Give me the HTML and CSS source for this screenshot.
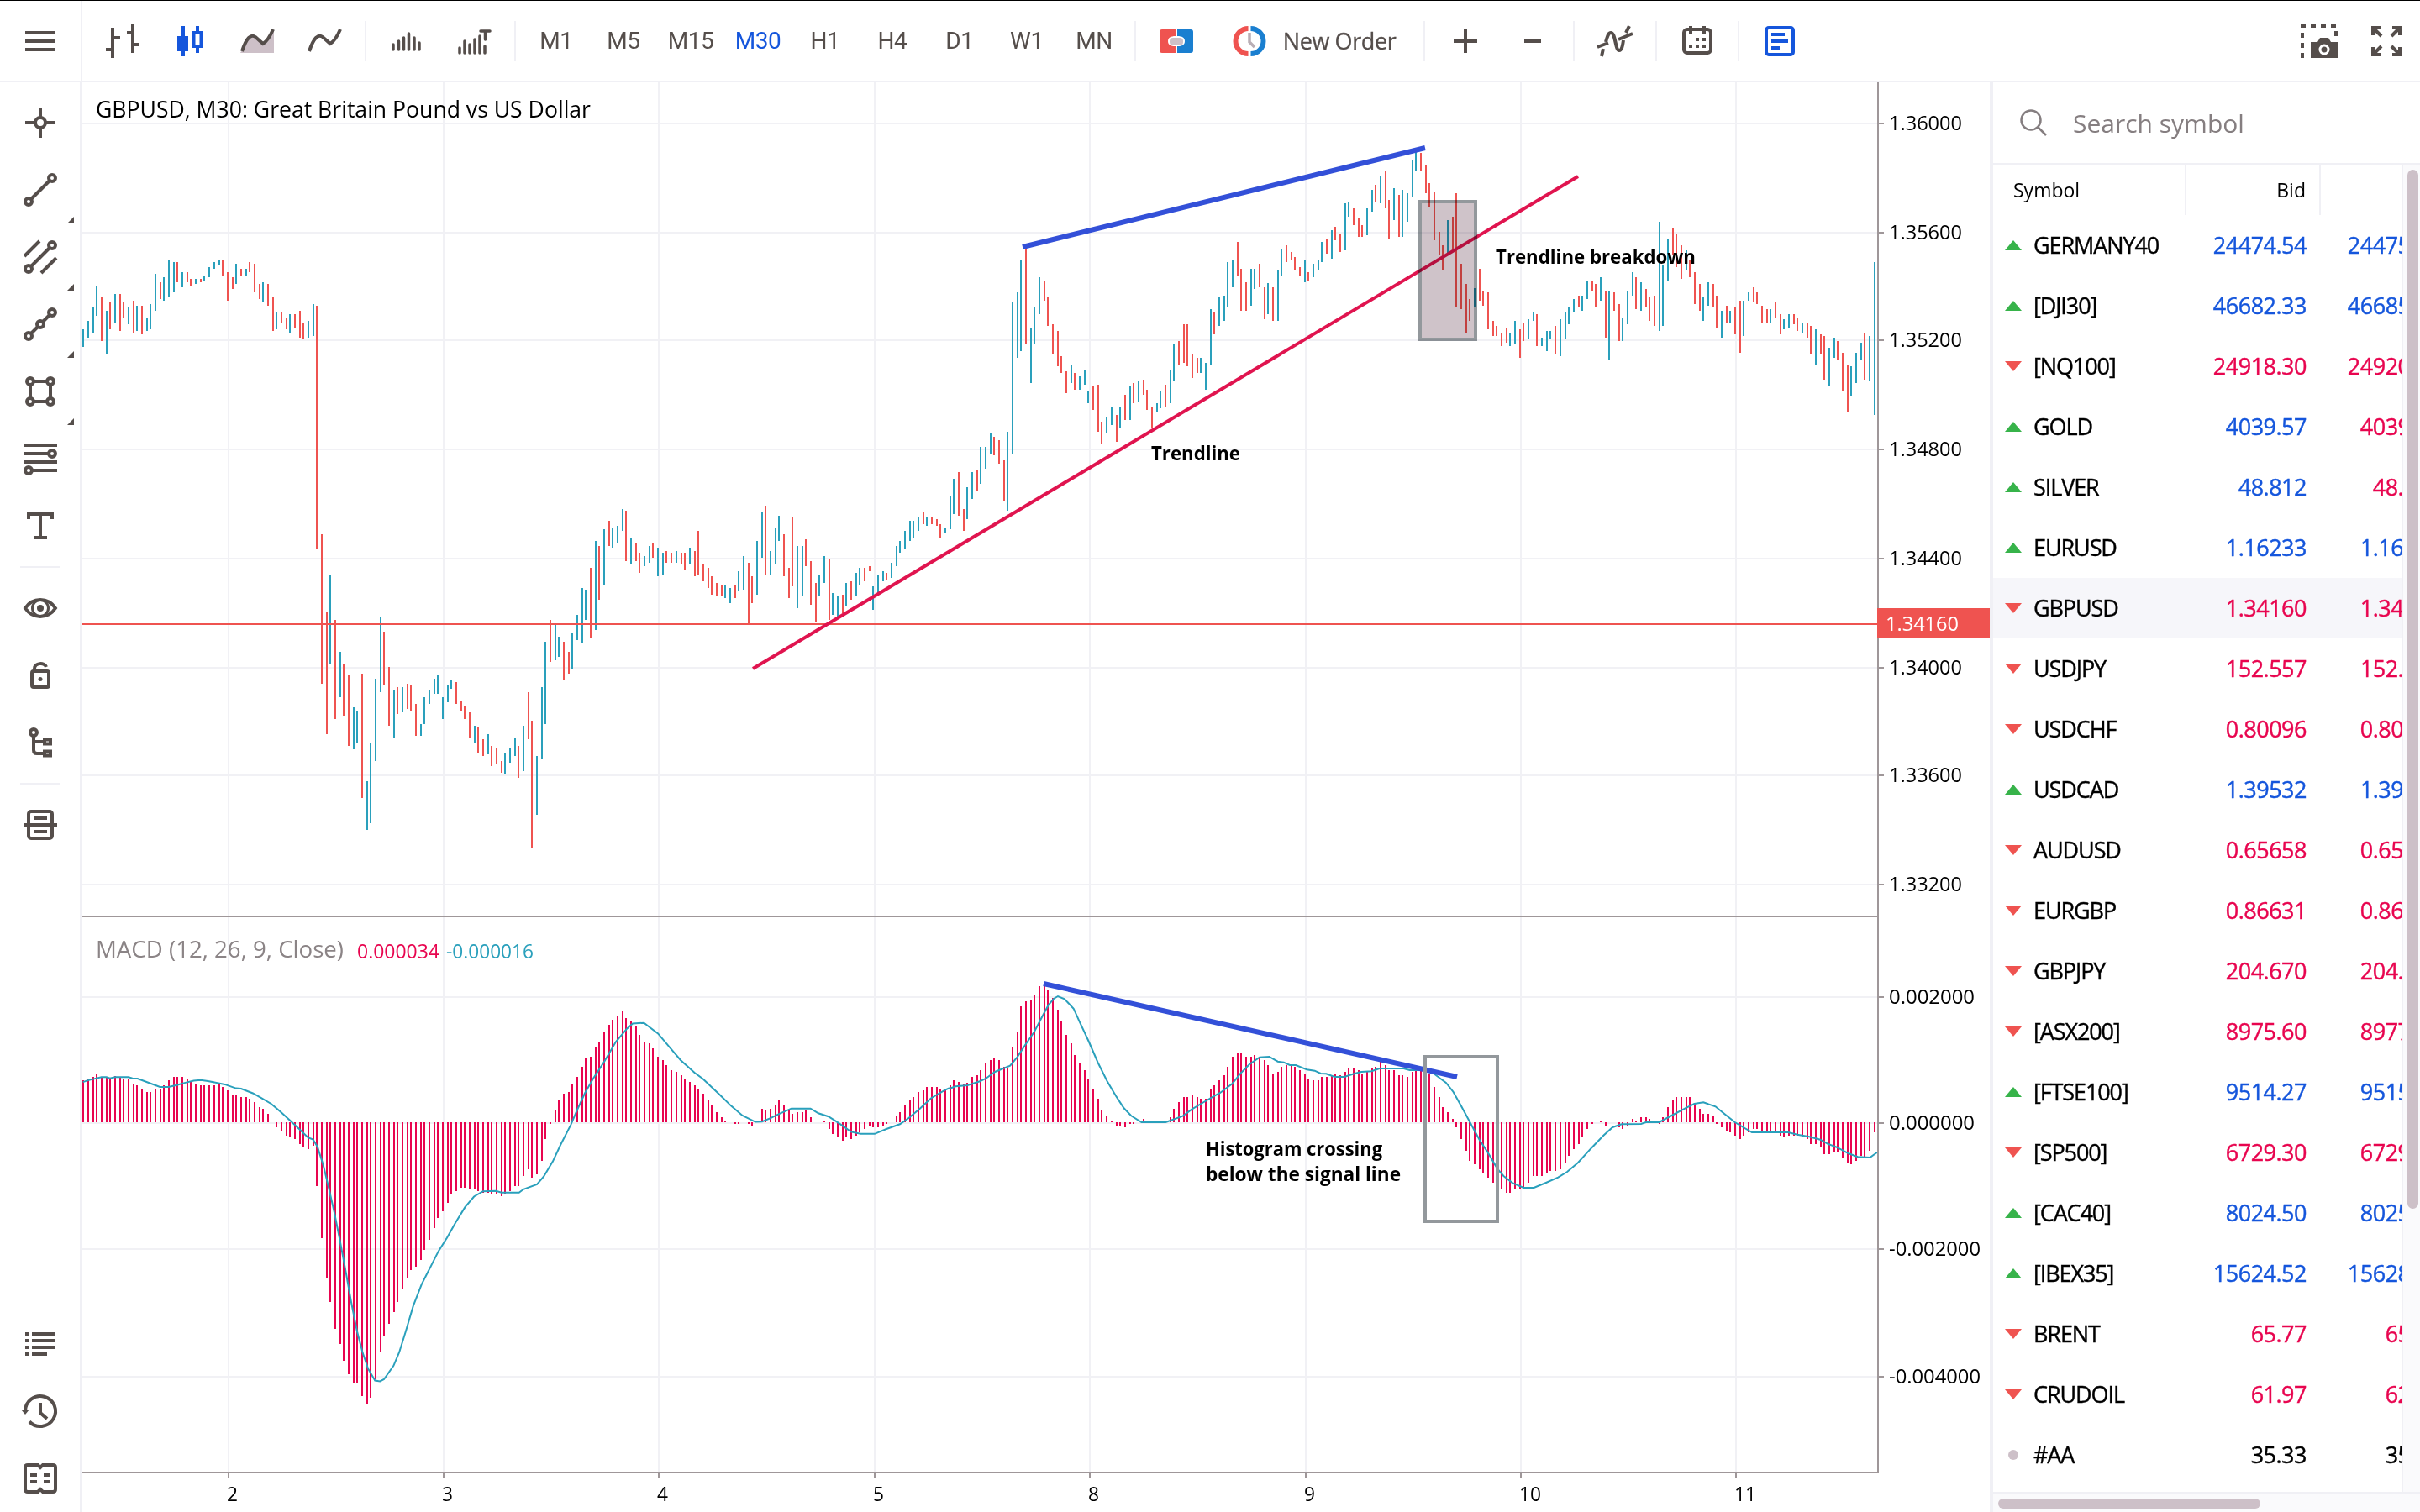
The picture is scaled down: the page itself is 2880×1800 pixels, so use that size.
FILE: index.html
```
<!DOCTYPE html>
<html lang="en">
<head>
    <meta charset="UTF-8">
    <meta name="viewport" content="width=device-width, initial-scale=1.0">
    <title>GBPUSD, M30</title>
    <link rel="stylesheet" href="styles.css">
</head>
<body>
    <header class="toolbar">
        <button class="menu-btn">
            <svg class="icon" viewBox="0 0 40 40"><path d="M2 10h36M2 20h36M2 30h36"/></svg>
        </button>

        <div class="tools">
            <button class="tool"><svg class="icon" viewBox="0 0 40 40"><path d="M8 4v36M0 30h8M8 16h9M32 0v34M25 10h7M32 24h8"/></svg></button>
            <button class="tool active"><svg class="icon" viewBox="0 0 40 40"><path class="fill" d="M5 14h13v18H5z"/><path d="M12 2v36M29 2v8M29 27v7M24.500 10h9v16h-9z"/></svg></button>
            <button class="tool"><svg class="icon" viewBox="0 0 40 40"><path class="shade" d="M0 34L8 20l7-6 12 9L40 7v27z"/><path d="M2 32C5 23 7 19 10 16q4-4 8-1l9 8c5-3 9-10 12-17"/></svg></button>
            <button class="tool"><svg class="icon" viewBox="0 0 40 40"><path d="M2 32C5 23 7 19 10 16q4-4 8-1l9 8c5-3 9-10 12-17"/></svg></button>
            <span class="sep"></span>
            <button class="tool"><svg class="icon round" viewBox="0 0 40 40"><path d="M4 24v6M10.500 20v10M16.500 16v14M22.500 11v19M29 16v14M35 22v8"/></svg></button>
            <button class="tool"><svg class="icon round" viewBox="0 0 40 40"><path d="M3 28v6M9 20v14M15 24v10M21 18v16M27 14v20M33 26v8M28 8h11M33.500 8v10"/></svg></button>
            <span class="sep"></span>
            <button class="tool">M1</button>
            <button class="tool">M5</button>
            <button class="tool">M15</button>
            <button class="tool active">M30</button>
            <button class="tool">H1</button>
            <button class="tool">H4</button>
            <button class="tool">D1</button>
            <button class="tool">W1</button>
            <button class="tool">MN</button>
            <span class="sep"></span>
            <button class="tool">
                <svg class="icon plain" viewBox="0 0 40 40">
                    <path fill="#ef5350" d="M3 6h16v8c-6 0-9 2-9 6s3 6 9 6v8H3a3 3 0 0 1-3-3V9a3 3 0 0 1 3-3z"/>
                    <path fill="#1a7fd0" d="M21 6h16a3 3 0 0 1 3 3v22a3 3 0 0 1-3 3H21v-8c6 0 9-2 9-6s-3-6-9-6z"/>
                    <rect x="12" y="16" width="16" height="9" rx="4" fill="#cdc0c8"/>
                </svg>
            </button>
            <button class="tool order">
                <svg class="icon plain" viewBox="0 0 40 40">
                    <path fill="none" stroke="#ef5350" stroke-width="6" d="M18.500 5a15 15 0 0 0 0 30"/>
                    <path fill="none" stroke="#1a7fd0" stroke-width="6" d="M21.500 5a15 15 0 0 1 0 30"/>
                    <path fill="none" stroke="#b9aeb5" stroke-width="3.500" d="M20 10v11l6 6"/>
                </svg>
                <span>New Order</span>
            </button>
            <span class="sep"></span>
            <button class="tool"><svg class="icon" viewBox="0 0 40 40"><path d="M6 20h28M20 6v28"/></svg></button>
            <button class="tool"><svg class="icon" viewBox="0 0 40 40"><path d="M10 20h20"/></svg></button>
            <span class="sep"></span>
            <button class="tool"><svg class="icon" viewBox="0 0 40 40"><path d="M-1 27l13-5M24 18l17-7M4 38l2-9M9 21c2-7 3-11 6-11 6 0 5 21 10 21 3 0 4-5 5-12M33 10l4-8"/></svg></button>
            <span class="sep"></span>
            <button class="tool"><svg class="icon" viewBox="0 0 40 40"><rect x="4" y="6" width="32" height="28" rx="4"/><path d="M12 2v9M28 2v9M18 18h4M26 18h4M10 26h4M18 26h4M26 26h4"/></svg></button>
            <span class="sep"></span>
            <button class="tool active"><svg class="icon" viewBox="0 0 40 40"><rect x="4" y="4" width="32" height="32" rx="3"/><path d="M10 12h16M10 20h20M10 28h10"/></svg></button>
        </div>

        <div class="tools-end">
            <button class="tool">
                <svg class="icon wide" viewBox="0 0 44 40">
                    <path stroke-dasharray="6 6" d="M2 40V2h40v12"/>
                    <path class="fill" d="M12 21h8l3-5h10l3 5h8v19H12z"/>
                    <circle cx="28" cy="30" r="5" fill="#554e4b" stroke="#fff" stroke-width="3"/>
                </svg>
            </button>
            <button class="tool"><svg class="icon" viewBox="0 0 40 40"><path d="M14 14L5 5M4 13V4h9M26 14l9-9M27 4h9v9M14 26l-9 9M4 27v9h9M26 26l9 9M36 27v9h-9"/></svg></button>
        </div>
    </header>

    <div class="workspace">
        <nav class="sidebar">
            <button class="side-btn"><svg class="icon" viewBox="0 0 40 40"><circle cx="20" cy="20" r="6"/><path d="M2 20h12M26 20h12M20 2v12M20 26v12"/></svg></button>
            <button class="side-btn more"><svg class="icon" viewBox="0 0 40 40"><circle cx="6" cy="34" r="4"/><circle cx="34" cy="6" r="4"/><path d="M9 31L31 9"/></svg></button>
            <button class="side-btn more"><svg class="icon" viewBox="0 0 40 40"><circle cx="6" cy="34" r="4"/><circle cx="34" cy="6" r="4"/><path d="M9 31L31 9M1 19L19 1M21 39l18-18"/></svg></button>
            <button class="side-btn more"><svg class="icon" viewBox="0 0 40 40"><circle cx="6" cy="34" r="4"/><circle cx="20" cy="20" r="4"/><circle cx="34" cy="6" r="4"/><path d="M9 31l8-8M23 17l8-8"/></svg></button>
            <button class="side-btn more"><svg class="icon" viewBox="0 0 40 40"><circle cx="8" cy="8" r="4"/><circle cx="32" cy="8" r="4"/><circle cx="8" cy="32" r="4"/><circle cx="32" cy="32" r="4"/><path d="M12 8h16M12 32h16M8 12v16M32 12v16"/></svg></button>
            <button class="side-btn"><svg class="icon" viewBox="0 0 40 40"><circle cx="34" cy="14" r="4"/><circle cx="6" cy="34" r="4"/><path d="M0 4h40M0 14h30M0 24h40M10 34h30"/></svg></button>
            <button class="side-btn"><svg class="icon" viewBox="0 0 40 40"><path d="M6 12V6h28v6M20 6v28M12 34h16"/></svg></button>
            <span class="side-sep"></span>
            <button class="side-btn"><svg class="icon" viewBox="0 0 40 40"><path d="M2 20c4-6 10-10 18-10s14 4 18 10c-4 6-10 10-18 10S6 26 2 20z"/><circle cx="20" cy="20" r="9.500" stroke-width="3"/><circle class="fill" cx="20" cy="20" r="4"/></svg></button>
            <button class="side-btn"><svg class="icon" viewBox="0 0 40 40"><rect x="10" y="15" width="20" height="19" rx="2"/><path d="M13 15v-3c0-7 12-8 14-2"/><circle class="fill" cx="20" cy="24.500" r="2.500"/></svg></button>
            <button class="side-btn"><svg class="icon" viewBox="0 0 40 40"><circle cx="12" cy="8" r="4"/><path d="M12 12v17q0 4 4 4h8M12 19h12"/><rect x="25" y="16.500" width="7" height="5"/><rect x="25" y="30.500" width="7" height="5"/></svg></button>
            <span class="side-sep"></span>
            <button class="side-btn"><svg class="icon" viewBox="0 0 40 40"><rect x="6" y="4" width="28" height="32" rx="3"/><path d="M0 20h40M12 12h16M12 28h16"/></svg></button>

            <div class="side-bottom">
                <button class="side-btn"><svg class="icon" viewBox="0 0 40 40"><path d="M2 8h4M2 16h4M2 24h4M2 32h4M10 8h28M10 16h28M10 24h28M10 32h18"/></svg></button>
                <button class="side-btn"><svg class="icon" viewBox="0 0 40 40"><path d="M2 20a18 18 0 1 1 5 12.500M20 10v12l8 7"/><path class="fill" d="M-3 18H7l-5 6z"/></svg></button>
                <button class="side-btn"><svg class="icon" viewBox="0 0 40 40"><path d="M5 4h12l3 3 3-3h12q3 0 3 3v26q0 3-3 3H23l-3-3-3 3H5q-3 0-3-3V7q0-3 3-3zM8 16h8M8 24h8M24 16h8M24 24h8"/></svg></button>
            </div>
        </nav>

        <main class="chart">
            <svg id="chart" viewBox="98 98 2270 1702">
                <g id="grid"></g>
                <g id="candles"></g>
                <path class="price-line" d="M98 743H2234"/>
                <g id="histogram"></g>
                <polyline id="signal" class="signal"/>

                <path class="divergence" d="M1217 294L1696 176M1242 1171L1734 1282"/>
                <path class="trendline" d="M896 796L1878 210"/>
                <rect class="zone filled" x="1690" y="240" width="66" height="164"/>
                <rect class="zone" x="1696" y="1258" width="86" height="196"/>

                <path class="axis" d="M98 1091H2234M2235 98V1754M98 1753H2236"/>
                <g id="labels"></g>
                <rect class="price-tag" x="2234" y="724" width="134" height="36"/>
                <text class="tag-text" x="2244" y="751" textLength="87" lengthAdjust="spacingAndGlyphs">1.34160</text>

                <text class="title" x="114" y="140" textLength="589" lengthAdjust="spacingAndGlyphs">GBPUSD, M30: Great Britain Pound vs US Dollar</text>
                <text class="macd-name" x="114" y="1140" textLength="295" lengthAdjust="spacingAndGlyphs">MACD (12, 26, 9, Close)</text>
                <text class="macd-value" x="425" y="1141" textLength="98" lengthAdjust="spacingAndGlyphs">0.000034</text>
                <text class="macd-value teal" x="531" y="1141" textLength="104" lengthAdjust="spacingAndGlyphs">-0.000016</text>

                <text class="note" x="1370" y="548" textLength="106" lengthAdjust="spacingAndGlyphs">Trendline</text>
                <text class="note" x="1780" y="314" textLength="238" lengthAdjust="spacingAndGlyphs">Trendline breakdown</text>
                <text class="note" x="1435" y="1376" textLength="210" lengthAdjust="spacingAndGlyphs">Histogram crossing</text>
                <text class="note" x="1435" y="1406" textLength="232" lengthAdjust="spacingAndGlyphs">below the signal line</text>
            </svg>
        </main>

        <aside class="watch">
            <div class="search">
                <svg class="search-icon" viewBox="0 0 32 32"><circle cx="13" cy="13" r="11.500"/><path d="M21 21l10 10"/></svg>
                <span>Search symbol</span>
            </div>
            <div class="quotes">
                <div class="quotes-main">
                    <div class="quotes-head">
                        <div class="col-symbol">Symbol</div>
                        <div class="col-bid">Bid</div>
                    </div>
                    <div id="rows"></div>
                </div>
                <div class="scroll-y"><div class="thumb"></div></div>
            </div>
            <div class="scroll-x"><div class="thumb"></div></div>
        </aside>
    </div>

    <script src="chart.js"></script>
</body>
</html>
```

FILE: styles.css
```
:root {
    --ink: #554e4b;
    --line: #f0f0f5;
    --axis: #9f9799;
    --blue: #1556dc;
    --red: #e8054f;
    --down: #ef5350;
    --up: #2aa0bc;
    --thumb: #cdc0c8;
}

* {
    box-sizing: border-box;
}

body {
    margin: 0;
    width: 2880px;
    height: 1800px;
    overflow: hidden;
    background: #fff;
    color: #000;
    font-family: "Open Sans", "Noto Sans", sans-serif;
    display: flex;
    flex-direction: column;
}

button {
    background: none;
    border: none;
    padding: 0;
    margin: 0;
    color: var(--ink);
    font-family: inherit;
}

.icon {
    width: 40px;
    height: 40px;
    overflow: visible;
    fill: none;
    stroke: currentColor;
    stroke-width: 4;
}

.icon.wide {
    width: 44px;
}

.icon.round {
    stroke-width: 3.5;
    stroke-linecap: round;
}

.icon.plain {
    stroke: none;
}

.icon .fill {
    fill: currentColor;
    stroke: none;
}

.icon .shade {
    fill: var(--thumb);
    stroke: none;
}

/* top toolbar */
.toolbar {
    height: 98px;
    flex: none;
    display: flex;
    border-top: 1px solid #000;
    border-bottom: 2px solid var(--line);
}

.menu-btn {
    width: 98px;
    border-right: 2px solid var(--line);
    display: flex;
    align-items: center;
    justify-content: center;
}

.tools,
.tools-end {
    display: flex;
    align-items: center;
    padding-left: 8px;
}

.tools-end {
    margin-left: auto;
}

.tool {
    width: 80px;
    height: 80px;
    display: flex;
    align-items: center;
    justify-content: center;
    font-family: Roboto, sans-serif;
    font-size: 28px;
    letter-spacing: -0.4px;
}

.tool.active {
    color: var(--blue);
}

.tool.order {
    width: 246px;
    gap: 20px;
    padding-left: 2px;
    font-family: "Open Sans", sans-serif;
    font-size: 27px;
    -webkit-text-stroke: 0.3px;
}

.sep {
    width: 2px;
    height: 48px;
    margin: 0 8px;
    background: var(--line);
}

.workspace {
    flex: 1;
    display: flex;
    min-height: 0;
}

/* drawing tools */
.sidebar {
    width: 98px;
    flex: none;
    padding-top: 8px;
    border-right: 3px solid var(--line);
    display: flex;
    flex-direction: column;
}

.side-btn {
    position: relative;
    width: 96px;
    height: 80px;
    flex: none;
    display: flex;
    align-items: center;
    justify-content: center;
}

.side-btn.more::after {
    content: "";
    position: absolute;
    right: 8px;
    bottom: 0;
    border-left: 8px solid transparent;
    border-bottom: 8px solid var(--ink);
}

.side-sep {
    width: 48px;
    height: 2px;
    margin: 8px 0 8px 24px;
    background: var(--line);
}

.side-bottom {
    margin-top: auto;
}

/* chart */
.chart {
    width: 2270px;
    flex: none;
}

.chart svg {
    display: block;
    width: 2270px;
    height: 1702px;
}

.grid-line {
    stroke: #f1f1f5;
    stroke-width: 2;
}

.axis,
.tick {
    fill: none;
    stroke: var(--axis);
    stroke-width: 2;
}

.up {
    fill: var(--up);
}

.down {
    fill: var(--down);
}

.hist {
    fill: var(--red);
}

.price-line {
    stroke: var(--down);
    stroke-width: 2;
}

.signal {
    fill: none;
    stroke: var(--up);
    stroke-width: 2;
}

.divergence {
    stroke: #3350d8;
    stroke-width: 6;
}

.trendline {
    stroke: #e0144f;
    stroke-width: 4;
}

.zone {
    fill: none;
    stroke: #93989c;
    stroke-width: 4;
}

.zone.filled {
    fill: #cfc3c9;
    mix-blend-mode: multiply;
}

.price-tag {
    fill: var(--down);
}

.label,
.tag-text,
.macd-value {
    font-size: 24px;
    -webkit-text-stroke: 0.4px;
}

.tag-text {
    fill: #fff;
}

.title {
    font-size: 27px;
    -webkit-text-stroke: 0.4px;
}

.macd-name {
    font-size: 27px;
    fill: #8b8486;
}

.macd-value {
    fill: var(--red);
}

.macd-value.teal {
    fill: var(--up);
}

.note {
    font-size: 23px;
    font-weight: 700;
}

/* market watch */
.watch {
    flex: 1;
    min-width: 0;
    border-left: 4px solid var(--line);
    display: flex;
    flex-direction: column;
}

.search {
    height: 96px;
    flex: none;
    display: flex;
    align-items: center;
    gap: 31px;
    padding-left: 32px;
    color: #857e80;
    font-size: 30px;
}

.search-icon {
    width: 32px;
    height: 32px;
    fill: none;
    stroke: #857e80;
    stroke-width: 2.5;
}

.quotes {
    height: 1584px;
    flex: none;
    display: flex;
    border-top: 3px solid var(--line);
    border-bottom: 2px solid var(--line);
}

.quotes-main {
    flex: 1;
    overflow: hidden;
}

.quotes-head {
    height: 59px;
    display: flex;
    align-items: center;
    font-size: 23px;
}

.quotes-head div {
    height: 59px;
    line-height: 58px;
    border-right: 2px solid var(--line);
}

.col-symbol {
    width: 230px;
    padding-left: 24px;
}

.col-bid {
    width: 160px;
    padding-right: 16px;
    text-align: right;
}

.row {
    width: 560px;
    height: 72px;
    padding-bottom: 1px;
    display: flex;
    align-items: center;
    font-size: 27px;
    letter-spacing: -0.5px;
    -webkit-text-stroke: 0.4px;
}

.row.selected {
    background: #f6f6fa;
}

.mark {
    width: 20px;
    margin: 0 14px 0 14px;
    display: flex;
    justify-content: center;
}

.mark::before {
    content: "";
    border-left: 10px solid transparent;
    border-right: 10px solid transparent;
}

.rise .mark::before {
    border-bottom: 12px solid #37b34a;
}

.fall .mark::before {
    border-top: 12px solid var(--down);
}

.flat .mark::before {
    width: 12px;
    height: 12px;
    border: none;
    border-radius: 50%;
    background: var(--thumb);
}

.name {
    width: 165px;
    letter-spacing: -1.1px;
}

.num {
    width: 160px;
    text-align: right;
}

.blue {
    color: var(--blue);
}

.red {
    color: var(--red);
}

.scroll-y {
    width: 22px;
    padding: 5px 4px 0 5px;
    background: #fafafc;
    border-left: 2px solid var(--line);
}

.scroll-y .thumb {
    width: 13px;
    height: 1237px;
    border-radius: 7px;
    background: var(--thumb);
}

.scroll-x {
    flex: 1;
    padding: 6px 6px 0;
    background: #fafafc;
}

.scroll-x .thumb {
    width: 312px;
    height: 12px;
    border-radius: 6px;
    background: var(--thumb);
}
```

FILE: chart.js
```
const NS = 'http://www.w3.org/2000/svg';
const STEP = 5.34;
const FIRST_X = 98.8;

function add(parent, tag, attrs, text) {
    const el = document.createElementNS(NS, tag);
    for (const key in attrs) el.setAttribute(key, attrs[key]);
    if (text) el.textContent = text;
    parent.appendChild(el);
}

// bars snap to the even pixel, as on a 2x canvas
function barX(i) {
    return Math.round((FIRST_X + i * STEP) / 2) * 2;
}

const prices = [
    ['1.36000', 147], ['1.35600', 277], ['1.35200', 405], ['1.34800', 535],
    ['1.34400', 665], ['1.34000', 795], ['1.33600', 923], ['1.33200', 1053]
];
const levels = [['0.002000', 1187], ['0.000000', 1337], ['-0.002000', 1487], ['-0.004000', 1639]];
const days = [['2', 272], ['3', 528], ['4', 784], ['5', 1041], ['8', 1297], ['9', 1554], ['10', 1810], ['11', 2066]];

const grid = document.getElementById('grid');
const labels = document.getElementById('labels');

prices.concat(levels).forEach(([text, y]) => {
    add(grid, 'path', { class: 'grid-line', d: `M98 ${y}H2234` });
    add(labels, 'path', { class: 'tick', d: `M2236 ${y}h6` });
    const len = text.length === 7 ? 87 : text[0] === '-' ? 109 : 102;
    add(labels, 'text', { class: 'label', x: 2248, y: y + 8, textLength: len, lengthAdjust: 'spacingAndGlyphs' }, text);
});
days.forEach(([text, x]) => {
    add(grid, 'path', { class: 'grid-line', d: `M${x} 98V1752` });
    add(labels, 'path', { class: 'tick', d: `M${x} 1754v6` });
    add(labels, 'text', { class: 'label', x: x - 2, y: 1787, textLength: text.length * 13, lengthAdjust: 'spacingAndGlyphs' }, text);
});

// high / low of every bar; u = up, d = down. Each block has its own origin and scale.
const candleBlocks = [
    { from: 0, top: 280, scale: 2.063, bars: `
        u231,275 u210,252 u177,239 u124,198 d153,260 u186,293 d165,231 u144,215 d144,235 d165,202
        u177,219 d161,239 u173,235 d173,243 u202,235 u169,231 u95,186 d116,157 u103,161 u62,153
        u66,140 d66,116 u91,128 d91,116 d107,124 u107,120 d107,116 u99,111 u78,103 u66,83
        u62,74 d62,99 d91,161 d103,132 u70,120 d83,99 u83,99 d66,91 d70,140 d120,157
        u116,165 d120,173 d153,235 u190,231 d190,215 d202,231 u194,239 d194,227 d186,252 d215,256
        u210,252 u169,248 d173,772 d734,1102 d924,1226 u834,1052 d945,1188 u1023,1135 d1052,1180 d1081,1254
        u1159,1263 u1168,1246 d1077,1382 u1341,1461 u1246,1444 u1089,1292 u937,1122 d974,1106 d1060,1205 u1118,1234
        d1110,1176 u1110,1172 d1102,1164 d1106,1168 d1151,1230 u1201,1230 u1135,1201 u1118,1151 u1089,1126 u1081,1126
        u1135,1188 u1106,1147 u1093,1114 d1098,1151 d1143,1168 d1155,1188 d1172,1234 u1205,1246 d1209,1271 d1238,1279
        u1226,1275 d1254,1304 d1259,1300 d1292,1320 u1271,1325 u1259,1296 u1234,1279 d1254,1333 u1205,1316 d1122,1238
        d1193,1506 u1279,1424 u1110,1287 u999,1201 d945,1048 u955,1044 u986,1036 d999,1093 d1023,1077 u978,1065
        u933,994 u867,1003 u871,945 d817,990 u751,970 d763,895 u722,858 d701,763 u718,767 u714,755
        u673,726 d677,801 u743,809 d755,801 d780,829 u788,813 u763,805 d755,792 u767,838` },
    { from: 129, top: 280, scale: 2.8, bars: `
        u1058,1131 d1053,1092 d1058,1092 u1053,1092 d1058,1098 d1058,1114 u1042,1098 d1053,1137 d986,1131 d1098,1154
        d1109,1176 d1137,1198 d1159,1204 d1165,1204 u1165,1210 u1176,1226 d1165,1210 u1120,1187 u1070,1182 d1092,1296
        d1137,1226 u1019,1198 u924,1075 d902,1131 u1053,1131 u974,1098 u935,1019 d997,1137 d1109,1210 d941,1170
        u1036,1243 u1036,1204 d1014,1103 d1086,1232 d1159,1288 u1131,1204 u1070,1159 d1081,1282 u1193,1266 u1204,1271
        d1198,1260 u1159,1238 d1154,1215 u1126,1204 u1109,1165 d1109,1154 d1103,1120 u1170,1249 u1131,1193 u1120,1154
        d1126,1148 u1092,1142 u1036,1103 u1019,1058 u986,1047 u952,1019 u952,1008 u941,986 d924,963 u941,969
        d941,963 d946,969 d963,1008 u974,991 u868,980 u812,930 d790,935 d913,986 u840,946 u790,879
        d784,851 u706,829 u706,778 u661,728 d672,734 d683,762 d750,885 u655,918 u224,728 u190,409
        u84,386 d40,364 u308,493 u241,364 u140,263 d151,218 d207,302 d297,398 d319,437 d403,459
        d454,526 u431,493 d459,515 u470,515 u448,498 u521,560 d504,582 d498,655 d622,694 u605,661
        u571,633 d599,689 u571,644 d532,616 u504,616 d493,560 u487,554 d482,532 d515,582 d571,645
        u560,588 u521,577 d498,571 u448,560 u364,487 d353,431 d297,426 d297,437 d398,476 d409,459
        u409,459 u426,515 u246,431 d258,330 u207,302 u202,286 u90,241 u84,174 d22,134 d112,252` },
    { from: 259, top: 150, scale: 3, bars: `
        d558,660 u510,642 u510,582 d492,576 d576,690 u560,672 d576,696 u516,696 u438,534 d426,486
        d450,480 d468,516 d504,534 u480,558 d522,552 u492,540 u480,516 u414,486 d402,456 u372,474
        d360,408 d384,450 u276,444 u270,324 d294,354 d330,396 d354,396 u294,390 u228,306 d210,270
        u180,276 d162,294 d264,402 u222,336 d246,396 u228,396 u240,342 u120,252 u90,162 d96,162
        d138,240 d204,288 d234,408 d378,462 d426,516 u336,456 d324,440 d240,648 d492,654 d564,738
        d618,696 u580,650 d510,624 d588,642 d594,726 d696,750 d714,750 d738,786 d720,774 u738,786
        u696,780 d726,828 d702,768 u690,762 u666,696 d672,786 u756,786 u732,804 u732,762 d714,816
        u690,822 u666,762 u648,708 u618,666 d606,648 u606,660 u552,618 d552,588 d564,648 u540,624
        d588,756 u588,834 d594,660 d636,768 u684,768 u588,708 u522,606 d540,654 u558,660 d582,648
        d612,696 d606,714 u342,732 u498,714 u402,552 d366,462 d384,504 d426,546 u444,516 d480,540
        d522,636 d564,660 u612,696 u558,642 d564,648 d606,720 u660,756 d642,702 u660,702 d648,744
        d624,810 u624,750 u594,624 d576,630 d594,636 d642,702 d654,702 u654,702 d630,684 d672,744
        u690,726 u672,720 d672,708 d684,732 u702,738 d702,756 d714,816 u726,852 d744,816 d750,906
        u792,930 u756,828 d768,834 d810,948 d852,1020 u858,966 u810,918 u774,834 d738,906 u750,912
        u486,1032` }
];

const candles = document.getElementById('candles');
candleBlocks.forEach(block => {
    block.bars.trim().split(/\s+/).forEach((bar, n) => {
        const [high, low] = bar.slice(1).split(',').map(v => block.top + v / block.scale);
        add(candles, 'rect', {
            class: bar[0] === 'u' ? 'up' : 'down',
            x: barX(block.from + n), y: Math.round(high), width: 2, height: Math.round(low - high)
        });
    });
});

// MACD histogram ends
const ZERO = 1336;
const histBlocks = [
    { from: 0, scale: 2.529, values: [
        496, 491, 486, 475, 486, 486, 491, 482, 486, 491, 491, 506, 511, 521, 531, 531, 521, 521, 511, 496,
        486, 486, 486, 491, 501, 506, 511, 511, 511, 511, 506, 516, 526, 541, 541, 546, 546, 551, 561, 577,
        582, 597, 622, 637, 647, 663, 668, 673, 688, 698, 703, 693, 814, 971, 1093, 1163, 1244, 1290, 1340, 1381,
        1406, 1406, 1447, 1472, 1452, 1396, 1315, 1265, 1229, 1194, 1163, 1123, 1093, 1067, 1057, 1037, 1007, 976, 941, 910,
        890, 865, 840, 830, 819, 819, 824, 824, 830, 835, 835, 840, 840, 845, 840, 830, 814, 814, 784, 764,
        789, 779, 738, 673, 627, 587, 556, 536, 531, 506, 486, 455, 430, 425, 395, 379, 349, 329, 314, 303,
        288, 309, 319, 334, 359, 379, 384, 400, 425, 435, 450, 465, 470, 481, 491, 501, 511, 521, 536, 556,
        572, 592, 607, 617, 622, 627, 627, 622, 627, 632, 622, 582, 587, 582, 572, 556, 572, 587, 597, 592,
        592, 587, 607, 622, 622, 617, 642, 658, 668, 678, 668, 673, 663, 652, 642, 632, 637, 637, 632, 627,
        622, 602, 592, 572, 556, 546, 531, 526, 516, 516, 516, 521, 526, 511, 496] },
    { from: 195, scale: 3, values: [
        594, 600, 598, 576, 570, 552, 528, 516, 510, 516, 540, 546, 468, 414, 324, 306, 300, 282, 252, 246,
        264, 294, 336, 378, 426, 456, 498, 528, 552, 582, 618, 654, 696, 714, 732, 750, 750, 756, 744, 744,
        738, 726, 732, 738, 738, 732, 738, 720, 690, 666, 648, 648, 642, 648, 654, 654, 618, 606, 588, 570,
        540, 504, 492, 492, 504, 504, 498, 504, 516, 534, 564, 558, 540, 534, 534, 540, 552, 564, 582, 588,
        588, 576, 576, 570, 564, 570, 558, 546, 546, 552, 564, 558, 546, 540, 516, 534, 552, 552, 570, 570,
        576, 558, 552, 552, 550, 564, 612, 648, 684, 702, 726, 756, 798, 840, 876, 888, 906, 918, 936, 954,
        966, 978, 990, 990, 978, 978, 972, 954, 930, 930, 930, 918, 912, 912, 906, 882, 858, 834, 816, 792,
        762, 744, 738, 732, 750, 738, 738, 756, 762, 750, 726, 732, 720, 720, 726, 738, 744, 720, 684, 660,
        648, 648, 648, 648, 672, 690, 708, 708, 714, 744, 756, 768, 774, 786, 798, 786, 774, 762, 762, 768,
        774, 774, 774, 786, 792, 786, 786, 786, 792, 798, 816, 816, 828, 852, 852, 846, 846, 864, 882, 888,
        876, 858, 864, 840, 774] }
];

const histogram = document.getElementById('histogram');
histBlocks.forEach(block => {
    block.values.forEach((v, n) => {
        const y = Math.round(1090 + v / block.scale);
        if (y === ZERO) return;
        add(histogram, 'rect', {
            class: 'hist', x: barX(block.from + n), y: Math.min(y, ZERO), width: 2, height: Math.abs(y - ZERO)
        });
    });
});

// signal line, x y pairs
const signalBlocks = [
    { left: 90, sx: 1.4933, sy: 2.529, points: [
        13, 501, 22, 496, 34, 491, 46, 486, 55, 486, 61, 490, 70, 486, 94, 486, 101, 490, 110, 491, 125, 500, 150, 516,
        165, 516, 180, 510, 195, 503, 210, 497, 222, 495, 235, 498, 265, 508, 285, 520, 294, 521, 315, 535, 330, 549,
        348, 567, 365, 592, 380, 615, 400, 647, 413, 668, 422, 674, 430, 697, 440, 750, 450, 820, 460, 895, 470, 980,
        480, 1070, 490, 1165, 500, 1250, 510, 1315, 520, 1365, 532, 1400, 541, 1402, 548, 1396, 565, 1355, 575, 1315,
        587, 1250, 600, 1175, 615, 1110, 630, 1060, 645, 1010, 660, 970, 675, 925, 692, 878, 708, 846, 724, 830,
        747, 829, 757, 834, 788, 834, 796, 824, 820, 809, 832, 785, 848, 740, 862, 690, 880, 630, 890, 590, 905, 535,
        920, 490, 940, 438, 960, 380, 980, 340, 990, 325, 1010, 323, 1035, 355, 1060, 405, 1075, 435, 1100, 473,
        1115, 492, 1145, 540, 1165, 573, 1185, 602, 1208, 621, 1220, 620, 1235, 610, 1250, 597, 1272, 581, 1306, 581,
        1320, 595, 1338, 605, 1352, 620, 1365, 635, 1378, 651, 1395, 657, 1420, 657, 1440, 643, 1465, 628, 1480, 610,
        1500, 582, 1520, 550, 1545, 525, 1552, 520] },
    { left: 1130, sx: 1.3876, sy: 3, points: [
        1, 617, 10, 610, 30, 606, 50, 592, 60, 582, 75, 558, 100, 536, 112, 505, 125, 462, 140, 415, 152, 365, 163, 320,
        172, 297, 179, 288, 190, 298, 205, 332, 215, 380, 230, 450, 245, 525, 260, 590, 275, 645, 288, 688, 300, 715,
        317, 738, 357, 738, 385, 716, 400, 692, 420, 666, 438, 643, 447, 633, 467, 600, 480, 565, 495, 532, 512, 506,
        528, 504, 542, 521, 552, 524, 562, 534, 572, 534, 590, 550, 603, 554, 613, 564, 622, 565, 636, 576, 652, 576,
        668, 565, 680, 558, 697, 556, 710, 546, 750, 546, 760, 552, 785, 552, 800, 565, 820, 597, 832, 630, 845, 680,
        860, 740, 875, 800, 890, 850, 905, 905, 915, 930, 930, 955, 948, 972, 965, 972, 985, 954, 1005, 935, 1020, 915,
        1038, 882, 1060, 830, 1080, 785, 1095, 756, 1110, 745, 1142, 744, 1150, 738, 1172, 738, 1190, 717, 1215, 688,
        1230, 672, 1245, 667, 1265, 682, 1280, 709, 1297, 738, 1325, 774, 1385, 774, 1400, 782, 1420, 790, 1438, 800,
        1450, 815, 1465, 827, 1485, 850, 1500, 862, 1520, 864, 1532, 845] }
];

const line = [];
signalBlocks.forEach(({ left, sx, sy, points }) => {
    for (let i = 0; i < points.length; i += 2) {
        line.push((left + points[i] / sx).toFixed(1) + ',' + (1090 + points[i + 1] / sy).toFixed(1));
    }
});
document.getElementById('signal').setAttribute('points', line.join(' '));

// market watch: direction, symbol, bid, ask, bid colour, ask colour
const quotes = [
    ['rise', 'GERMANY40', '24474.54', '24475.54', 'blue', 'blue'],
    ['rise', '[DJI30]', '46682.33', '46685.33', 'blue', 'blue'],
    ['fall', '[NQ100]', '24918.30', '24920.30', 'red', 'red'],
    ['rise', 'GOLD', '4039.57', '4039.87', 'blue', 'red'],
    ['rise', 'SILVER', '48.812', '48.842', 'blue', 'red'],
    ['rise', 'EURUSD', '1.16233', '1.16243', 'blue', 'blue'],
    ['fall', 'GBPUSD', '1.34160', '1.34172', 'red', 'red'],
    ['fall', 'USDJPY', '152.557', '152.569', 'red', 'red'],
    ['fall', 'USDCHF', '0.80096', '0.80109', 'red', 'red'],
    ['rise', 'USDCAD', '1.39532', '1.39546', 'blue', 'blue'],
    ['fall', 'AUDUSD', '0.65658', '0.65670', 'red', 'red'],
    ['fall', 'EURGBP', '0.86631', '0.86644', 'red', 'red'],
    ['fall', 'GBPJPY', '204.670', '204.690', 'red', 'red'],
    ['fall', '[ASX200]', '8975.60', '8977.60', 'red', 'red'],
    ['rise', '[FTSE100]', '9514.27', '9515.27', 'blue', 'blue'],
    ['fall', '[SP500]', '6729.30', '6729.80', 'red', 'red'],
    ['rise', '[CAC40]', '8024.50', '8025.50', 'blue', 'blue'],
    ['rise', '[IBEX35]', '15624.52', '15628.52', 'blue', 'blue'],
    ['fall', 'BRENT', '65.77', '65.82', 'red', 'red'],
    ['fall', 'CRUDOIL', '61.97', '62.02', 'red', 'red'],
    ['flat', '#AA', '35.33', '35.38', '', '']
];

document.getElementById('rows').innerHTML = quotes.map(([dir, name, bid, ask, bidColor, askColor]) => `
    <div class="row ${dir}${name === 'GBPUSD' ? ' selected' : ''}">
        <span class="mark"></span>
        <span class="name">${name}</span>
        <span class="num ${bidColor}">${bid}</span>
        <span class="num ${askColor}">${ask}</span>
    </div>`).join('');
```
